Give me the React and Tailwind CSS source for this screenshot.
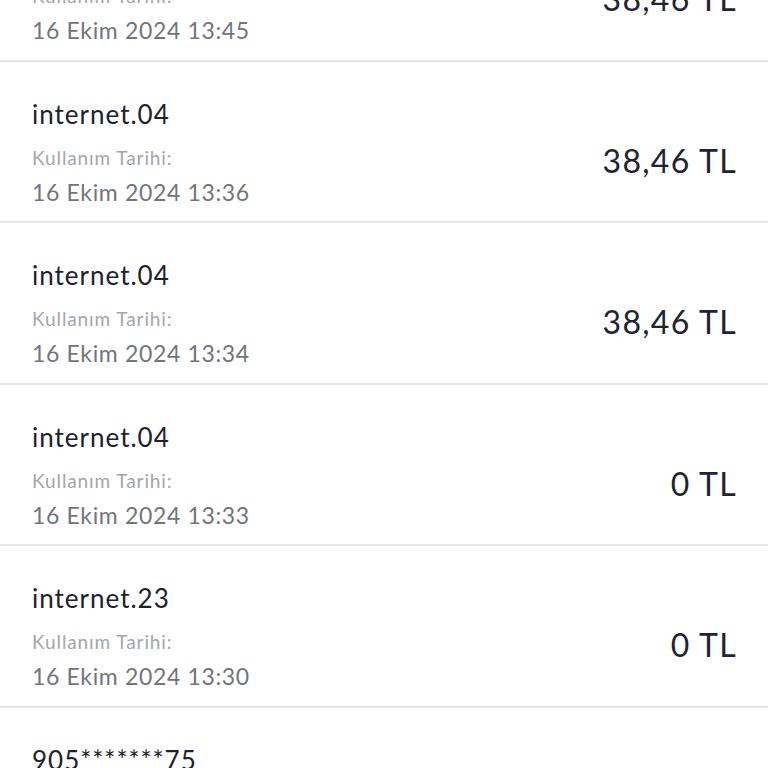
import React from "react";

const rows = [
  { title: "internet.04", date: "16 Ekim 2024 13:45", amount: "38,46 TL" },
  { title: "internet.04", date: "16 Ekim 2024 13:36", amount: "38,46 TL" },
  { title: "internet.04", date: "16 Ekim 2024 13:34", amount: "38,46 TL" },
  { title: "internet.04", date: "16 Ekim 2024 13:33", amount: "0 TL" },
  { title: "internet.23", date: "16 Ekim 2024 13:30", amount: "0 TL" },
  { title: "905*******75", date: "16 Ekim 2024 13:28", amount: "0 TL" },
];

function Row({ r }) {
  return (
    <div className="h-[161.5px] border-b-2 border-[#e6e7eb] px-8 pt-[36px]">
      <div className="flex items-center justify-between">
        <div className="flex flex-col">
          <div className="text-[26px] leading-[32px] tracking-[1px] text-[#1d2130]">{r.title}</div>
          <div className="mt-[14px] text-[19px] leading-[28px] tracking-[0.9px] text-[#a3a6ad]">Kullanım Tarihi:</div>
          <div className="text-[23px] leading-[40px] tracking-[0.65px] text-[#72757c]">{r.date}</div>
        </div>
        <div className="mr-[-1px] mt-[12px] text-[32px] leading-[40px] tracking-[1.3px] text-[#1d2433]">{r.amount}</div>
      </div>
    </div>
  );
}

export default function App() {
  return (
    <div
      className="h-[768px] w-[768px] overflow-hidden bg-white"
      style={{ fontFamily: "Lato, 'Noto Sans', sans-serif" }}
    >
      <div className="-mt-[100px]">
        {rows.map((r, i) => (
          <Row key={i} r={r} />
        ))}
      </div>
    </div>
  );
}
